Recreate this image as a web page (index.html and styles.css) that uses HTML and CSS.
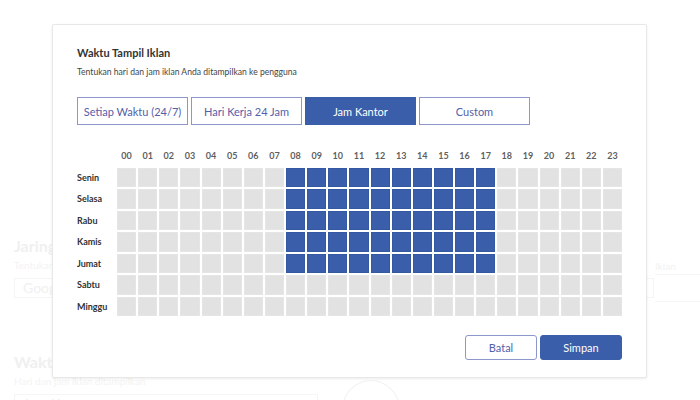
FILE: index.html
```html
<!DOCTYPE html>
<html lang="id">
<head>
<meta charset="utf-8">
<title>Waktu Tampil Iklan</title>
<link rel="stylesheet" href="styles.css">
</head>
<body>
<div class="page">
  <div class="page-main">
    <section class="bg-section">
      <h2 class="bg-title">Jaringan Iklan</h2>
      <p class="bg-text">Tentukan jaringan iklan Anda</p>
      <div class="bg-input">Google</div>
    </section>
    <section class="bg-section bg-section-2">
      <h2 class="bg-title">Waktu Tampil Iklan</h2>
      <p class="bg-text">Hari dan jam iklan ditampilkan</p>
      <div class="bg-row">
        <div class="bg-input bg-input-short">Jam Kantor</div>
        <div class="bg-circle"><span class="bg-cal">10</span></div>
        <div class="bg-input bg-input-wide"></div>
      </div>
    </section>
  </div>
  <div class="page-side">
    <div class="bg-side-text">Iklan</div>
    <div class="bg-line"></div>
    <div class="bg-line bg-line-2"></div>
  </div>
</div>

<div class="modal">
  <h1 class="modal-title">Waktu Tampil Iklan</h1>
  <p class="modal-sub">Tentukan hari dan jam iklan Anda ditampilkan ke pengguna</p>

  <div class="tabs">
    <button class="tab">Setiap Waktu (24/7)</button>
    <button class="tab">Hari Kerja 24 Jam</button>
    <button class="tab tab-active">Jam Kantor</button>
    <button class="tab">Custom</button>
  </div>

  <div class="grid" id="grid"></div>

  <div class="footer">
    <button class="btn btn-outline">Batal</button>
    <button class="btn btn-primary">Simpan</button>
  </div>
</div>

<script src="script.js"></script>
</body>
</html>
```

FILE: script.js
```js
(function () {
  var days = ["Senin", "Selasa", "Rabu", "Kamis", "Jumat", "Sabtu", "Minggu"];
  var grid = document.getElementById("grid");
  var html = '<div class="corner"></div>';
  for (var h = 0; h < 24; h++) {
    html += '<div class="hour">' + (h < 10 ? "0" + h : h) + "</div>";
  }
  for (var d = 0; d < days.length; d++) {
    html += '<div class="day">' + days[d] + "</div>";
    for (var c = 0; c < 24; c++) {
      var on = d < 5 && c >= 8 && c <= 17;
      html += '<div class="cell' + (on ? " cell-on" : "") + '"></div>';
    }
  }
  grid.innerHTML = html;
})();
```

FILE: styles.css
```css
* { box-sizing: border-box; }

html, body {
  margin: 0;
  width: 700px;
  height: 400px;
  overflow: hidden;
  background: #fff;
  font-family: Lato, "Open Sans", sans-serif;
}

/* faint page behind the dialog */
.page {
  display: flex;
  height: 400px;
  overflow: hidden;
  padding-top: 236px;
}
.page-main {
  width: 640px;
  padding-left: 14px;
}
.bg-section-2 { margin-top: 54px; }
.bg-title {
  margin: 0;
  font-size: 16px;
  font-weight: 700;
  color: #f0f0f0;
  line-height: 20px;
}
.bg-text {
  margin: 2px 0 6px;
  font-size: 10px;
  color: #f3f3f3;
  line-height: 14px;
}
.bg-input {
  height: 20px;
  border: 1px solid #f5f5f5;
  padding-left: 8px;
  font-size: 14px;
  line-height: 18px;
  color: #f0f0f0;
  width: 640px;
}
.bg-row { display: flex; align-items: flex-start; gap: 24px; }
.bg-input-short { width: 310px; }
.bg-input-wide { width: 220px; margin-top: 6px; }
.bg-circle {
  width: 60px; height: 60px;
  border: 1px solid #f2f2f2;
  border-radius: 50%;
  margin-top: -14px;
  display: flex; align-items: center; justify-content: center;
}
.bg-cal {
  width: 22px; height: 18px;
  border: 1px solid #f0f0f0;
  font-size: 9px; color: #f0f0f0; text-align: center;
}
.page-side { padding-top: 24px; padding-left: 15px; flex: 1; }
.bg-side-text { font-size: 10px; color: #f2f2f2; line-height: 12px; }
.bg-line { height: 1px; background: #f6f6f6; margin-top: 2px; }
.bg-line-2 { margin-top: 26px; }

/* dialog */
.modal {
  position: absolute;
  left: 52px;
  top: 24px;
  width: 595px;
  height: 354px;
  background: #fff;
  border: 1px solid #e8e8e8;
  border-radius: 2px;
  box-shadow: 0 1px 3px rgba(0,0,0,0.08);
  padding: 21px 24px 0 24px;
}
.modal-title {
  margin: 0;
  font-size: 11px;
  font-weight: 700;
  color: #333;
  line-height: 14px;
}
.modal-sub {
  margin: 6px 0 0;
  font-size: 8.6px;
  color: #444;
  line-height: 12px;
}

.tabs {
  display: flex;
  gap: 3px;
  margin-top: 19px;
}
.tab {
  width: 111px;
  height: 28px;
  border: 1px solid #8e97cd;
  background: #fff;
  color: #5360a9;
  font-family: inherit;
  font-size: 11px;
  padding: 0;
  border-radius: 0;
}
.tab-active {
  background: #3a5eaa;
  border-color: #3a5eaa;
  color: #fff;
}

.grid {
  display: grid;
  grid-template-columns: 38px repeat(24, 1fr);
  grid-template-rows: 16px;
  grid-auto-rows: 19.7px;
  column-gap: 2px;
  row-gap: 1.8px;
  margin-top: 25px;
  width: 545px;
}
.hour {
  font-size: 9px;
  font-weight: 700;
  color: #5f5f5f;
  text-align: center;
  line-height: 12px;
}
.day {
  font-size: 9px;
  font-weight: 700;
  color: #333;
  line-height: 19.7px;
}
.cell {
  background: #e2e2e2;
  border: 1px solid #e5e5e5;
}
.cell-on {
  background: #3a5eaa;
  border-color: #3558a3;
}

.footer {
  display: flex;
  justify-content: flex-end;
  gap: 3px;
  margin-top: 19px;
}
.btn {
  height: 25px;
  border-radius: 3px;
  font-family: inherit;
  font-size: 11px;
  padding: 0;
}
.btn-outline {
  width: 72px;
  border: 1px solid #8e97cd;
  background: #fff;
  color: #5360a9;
}
.btn-primary {
  width: 82px;
  border: 1px solid #3a5eaa;
  background: #3a5eaa;
  color: #fff;
}
```
